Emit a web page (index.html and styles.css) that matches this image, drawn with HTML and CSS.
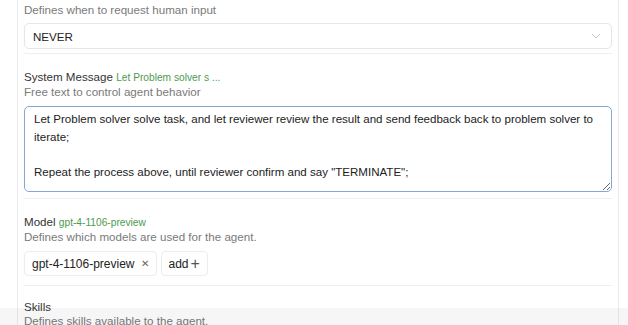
FILE: index.html
```html
<!DOCTYPE html>
<html lang="en">
<head>
    <meta charset="UTF-8">
    <meta name="viewport" content="width=device-width, initial-scale=1.0">
    <title>Agent Configuration</title>
    <link rel="stylesheet" href="styles.css">
</head>
<body>

    <div class="panel">
        <div class="section first">
            <div class="desc">Defines when to request human input</div>
            <div class="select">
                <span>NEVER</span>
                <svg class="chevron" width="10" height="6" viewBox="0 0 10 6">
                    <path d="M1 1 L5 5 L9 1" fill="none" stroke="#c4c4c4" stroke-width="1"/>
                </svg>
            </div>
        </div>

        <div class="section">
            <div class="label">System Message <span class="value">Let Problem solver s ...</span></div>
            <div class="desc">Free text to control agent behavior</div>
            <textarea class="message">Let Problem solver solve task, and let reviewer review the result and send feedback back to problem solver to iterate;

Repeat the process above, until reviewer confirm and say "TERMINATE";</textarea>
        </div>

        <div class="section">
            <div class="label">Model <span class="value">gpt-4-1106-preview</span></div>
            <div class="desc">Defines which models are used for the agent.</div>
            <div class="tags">
                <span class="tag">gpt-4-1106-preview <span class="close">&#x2715;</span></span>
                <span class="tag">add<span class="plus">+</span></span>
            </div>
        </div>

        <div class="section last">
            <div class="label">Skills</div>
            <div class="desc">Defines skills available to the agent.</div>
        </div>
    </div>

    <div class="footer-fade"></div>

</body>
</html>
```

FILE: styles.css
```css
body {
    font-family: "Liberation Sans", Arial, sans-serif;
    margin: 0;
    background: white;
    color: #333;
    overflow: hidden;
}
.panel {
    margin-left: 17px;
    width: 588px;
    padding: 3px 6px 0 6px;
    border-left: 1px solid #ececec;
    border-right: 1px solid #ececec;
    min-height: 400px;
}
.section {
    border-bottom: 1px solid #efefef;
    padding-bottom: 4px;
    padding-top: 15px;
}
.section.first {
    padding-top: 0;
}
.section.last {
    border-bottom: none;
    padding-top: 13px;
}
.label {
    font-size: 11.6px;
    line-height: 15px;
    color: #333;
}
.value {
    font-size: 10.2px;
    color: #4e9a4e;
}
.desc {
    font-size: 11.6px;
    line-height: 14px;
    color: #7a7a7a;
    margin-bottom: 7px;
}
.first .desc {
    margin-bottom: 6px;
}
.select {
    display: flex;
    align-items: center;
    justify-content: space-between;
    height: 24px;
    border: 1px solid #e6e6e6;
    border-radius: 5px;
    padding: 0 10px 0 8px;
    font-size: 11.6px;
    color: #222;
}
.message {
    display: block;
    box-sizing: border-box;
    width: 100%;
    height: 86px;
    margin: 0 0 2px 0;
    padding: 4px 9px;
    border: 1px solid #86a6d8;
    border-radius: 5px;
    font-family: "Liberation Sans", Arial, sans-serif;
    font-size: 11.55px;
    line-height: 17.5px;
    color: #222;
    resize: vertical;
    outline: none;
}
.tags {
    display: flex;
    gap: 4px;
    margin-bottom: 5px;
}
.tag {
    display: flex;
    align-items: center;
    height: 23px;
    border: 1px solid #ececec;
    border-radius: 4px;
    padding: 0 7px;
    font-size: 12px;
    color: #222;
}
.close {
    font-size: 10px;
    color: #666;
    margin-left: 6px;
}
.plus {
    font-size: 16px;
    color: #555;
    margin-left: 2px;
}
.footer-fade {
    position: fixed;
    left: 0;
    right: 0;
    bottom: 0;
    height: 17px;
    background: rgba(0, 0, 0, 0.035);
}
```
